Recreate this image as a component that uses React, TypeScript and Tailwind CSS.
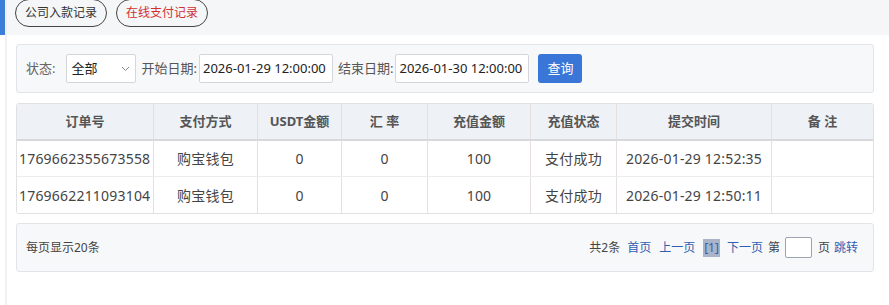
import React from "react";

const cols = [
  { t: "订单号", w: "w-[137px]" },
  { t: "支付方式", w: "w-[104px]" },
  { t: "USDT金额", w: "w-[84px]" },
  { t: "汇 率", w: "w-[86px]" },
  { t: "充值金额", w: "w-[103px]" },
  { t: "充值状态", w: "w-[86px]" },
  { t: "提交时间", w: "w-[155px]" },
  { t: "备 注", w: "" },
];

const rows = [
  ["1769662355673558", "购宝钱包", "0", "0", "100", "支付成功", "2026-01-29 12:52:35", ""],
  ["1769662211093104", "购宝钱包", "0", "0", "100", "支付成功", "2026-01-29 12:50:11", ""],
];

export default function App() {
  return (
    <div
      className="w-[889px] h-[305px] bg-white text-[#333] overflow-hidden flex"
      style={{ fontFamily: '"Noto Sans", "Noto Sans CJK SC", sans-serif' }}
    >
      <div className="w-[5px] flex flex-col">
        <div className="h-[35px] bg-[#3c7fd9]" />
      </div>
      <div className="w-[2px] bg-[#f0f1f3]" />
      <div className="flex-1 flex flex-col">
        <div className="h-[35px] bg-[#f5f6f8] flex items-start gap-[9px] pl-[8px]">
          <div className="h-[28px] -mt-[1px] px-[9px] flex items-center rounded-full border border-[#444] text-[12px] text-[#333]">
            公司入款记录
          </div>
          <div className="h-[28px] -mt-[1px] px-[9px] flex items-center rounded-full border border-[#444] text-[12px] text-[#d03030]">
            在线支付记录
          </div>
        </div>
        <div className="pl-[9px] pr-[15px] pt-[9px]">
          <div className="h-[49px] bg-[#f7f8fa] border border-[#e2e4e8] rounded-[3px] flex items-center pl-[9px] text-[13px]">
            <span className="text-[#666]">状态:</span>
            <div className="ml-[11px] w-[70px] h-[29px] bg-white border border-[#d4d6da] rounded-[2px] flex items-center justify-between pl-[4px] pr-[5px]">
              <span className="text-[#222]">全部</span>
              <svg width="9" height="6" viewBox="0 0 9 6">
                <path d="M1 1 L4.5 4.5 L8 1" fill="none" stroke="#888" strokeWidth="1" />
              </svg>
            </div>
            <span className="ml-[5px] text-[#555]">开始日期:</span>
            <div className="ml-[2px] w-[134px] h-[29px] bg-white border border-[#d4d6da] rounded-[2px] flex items-center pl-[3px] text-[#222]">
              2026-01-29 12:00:00
            </div>
            <span className="ml-[5px] text-[#555]">结束日期:</span>
            <div className="ml-[2px] w-[134px] h-[29px] bg-white border border-[#d4d6da] rounded-[2px] flex items-center pl-[3px] text-[#222]">
              2026-01-30 12:00:00
            </div>
            <div className="ml-[9px] w-[44px] h-[29px] bg-[#3a75d8] rounded-[3px] flex items-center justify-center text-white">
              查询
            </div>
          </div>
          <div className="mt-[10px] border border-[#dfe1e5] rounded-[3px] overflow-hidden">
            <div className="flex h-[37px] bg-[#eef1f5] border-b-2 border-[#d6d8dc] text-[13px] font-bold text-[#555]">
              {cols.map((c, i) => (
                <div
                  key={i}
                  className={`${c.w} ${c.w ? "" : "flex-1"} flex items-center justify-center ${i < cols.length - 1 ? "border-r border-[#e6dfe0]" : ""}`}
                >
                  {c.t}
                </div>
              ))}
            </div>
            {rows.map((r, ri) => (
              <div
                key={ri}
                className={`flex h-[36px] bg-white text-[14px] tracking-[0.2px] text-[#444] ${ri === 0 ? "border-b border-[#ececec]" : ""}`}
              >
                {r.map((v, i) => (
                  <div
                    key={i}
                    className={`${cols[i].w} ${cols[i].w ? "" : "flex-1"} flex items-center whitespace-nowrap ${i === 0 ? "justify-start pl-[2px]" : "justify-center"} ${i < cols.length - 1 ? "border-r border-[#e6dfe0]" : ""}`}
                  >
                    {v}
                  </div>
                ))}
              </div>
            ))}
          </div>
          <div className="mt-[9px] h-[49px] bg-[#f7f8fa] border border-[#e2e4e8] rounded-[3px] flex items-center justify-between pl-[9px] pr-[15px] text-[12px]">
            <span className="text-[#444]">每页显示20条</span>
            <div className="flex items-center text-[#444]">
              <span>共2条</span>
              <span className="ml-[7px] text-[#2f5fb3]">首页</span>
              <span className="ml-[8px] text-[#2f5fb3]">上一页</span>
              <span className="ml-[8px] bg-[#aab3c8] text-[#2f5fb3] px-[1px]">[1]</span>
              <span className="ml-[7px] text-[#2f5fb3]">下一页</span>
              <span className="ml-[5px]">第</span>
              <div className="ml-[5px] w-[27px] h-[21px] bg-white border border-[#9aa3b0] rounded-[2px]" />
              <span className="ml-[6px]">页</span>
              <span className="ml-[4px] text-[#2f5fb3]">跳转</span>
            </div>
          </div>
        </div>
      </div>
    </div>
  );
}
